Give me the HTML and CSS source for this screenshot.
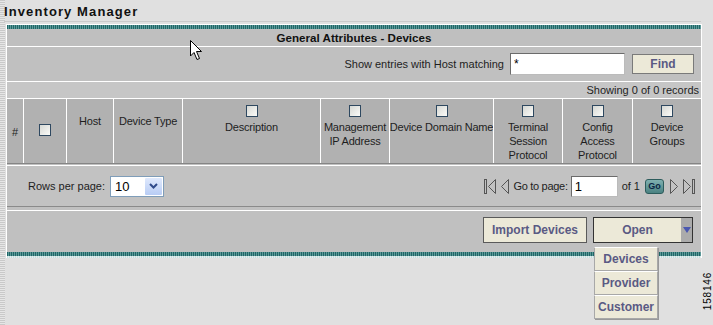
FILE: index.html
```html
<!DOCTYPE html>
<html lang="en">
<head>
  <meta charset="UTF-8">
  <title>Inventory Manager</title>
  <link rel="stylesheet" href="styles.css">
</head>
<body>

  <div class="app-title">Inventory Manager</div>

  <div class="panel">
    <div class="stripe"></div>
    <div class="panel-title">General Attributes - Devices</div>

    <div class="search-row">
      <label for="hostFilter">Show entries with Host matching</label>
      <input type="text" id="hostFilter" class="text-input search-input" value="*">
      <button class="btn find-btn">Find</button>
    </div>

    <div class="count-row">Showing 0 of 0 records</div>

    <div class="grid-head">
      <div class="col col-mid">#</div>
      <div class="col col-mid"><span class="checkbox"></span></div>
      <div class="col col-plain">Host</div>
      <div class="col col-plain">Device Type</div>
      <div class="col"><span class="checkbox"></span>Description</div>
      <div class="col"><span class="checkbox"></span>Management<br>IP Address</div>
      <div class="col"><span class="checkbox"></span>Device Domain Name</div>
      <div class="col"><span class="checkbox"></span>Terminal<br>Session<br>Protocol</div>
      <div class="col"><span class="checkbox"></span>Config<br>Access<br>Protocol</div>
      <div class="col"><span class="checkbox"></span>Device<br>Groups</div>
    </div>

    <div class="pager-row">
      <div class="rows-per-page">
        <span>Rows per page:</span>
        <div class="select-box">
          <span class="select-value">10</span>
          <span class="select-btn">
            <svg width="9" height="6" viewBox="0 0 9 6"><path d="M1 1 L4.5 4.5 L8 1" fill="none" stroke="#2f4a8a" stroke-width="2"/></svg>
          </span>
        </div>
      </div>
      <div class="pager">
        <svg class="nav-icon" width="14" height="17" viewBox="0 0 14 17"><rect x="1.5" y="1.5" width="2" height="14" fill="none" stroke="#555"/><path d="M12.5 1.5 L5.5 8.5 L12.5 15.5 Z" fill="none" stroke="#555"/></svg>
        <svg class="nav-icon" width="10" height="17" viewBox="0 0 10 17"><path d="M8.5 1.5 L1.5 8.5 L8.5 15.5 Z" fill="none" stroke="#555"/></svg>
        <span class="page-label">Go to page:</span>
        <input type="text" class="text-input page-input" value="1">
        <span>of 1</span>
        <button class="go-btn">Go</button>
        <svg class="nav-icon" width="10" height="17" viewBox="0 0 10 17"><path d="M1.5 1.5 L8.5 8.5 L1.5 15.5 Z" fill="none" stroke="#555"/></svg>
        <svg class="nav-icon last" width="14" height="17" viewBox="0 0 14 17"><path d="M1.5 1.5 L8.5 8.5 L1.5 15.5 Z" fill="none" stroke="#555"/><rect x="10.5" y="1.5" width="2" height="14" fill="none" stroke="#555"/></svg>
      </div>
    </div>

    <div class="action-row">
      <button class="btn import-btn">Import Devices</button>
      <div class="open-menu">
        <div class="open-btn">
          <span class="open-label">Open</span>
          <span class="open-arrow">
            <svg width="8" height="6" viewBox="0 0 8 6"><path d="M0 0 L8 0 L4 6 Z" fill="#4a58b0"/></svg>
          </span>
        </div>
        <div class="menu-list">
          <div class="menu-item">Devices</div>
          <div class="menu-item">Provider</div>
          <div class="menu-item">Customer</div>
        </div>
      </div>
    </div>

    <div class="stripe"></div>
    <div class="stripe-shadow"></div>
  </div>

  <svg class="cursor" width="13" height="21" viewBox="0 0 13 21">
    <path d="M0.5 0.5 L0.5 16 L4 12.5 L7 19.5 L9.5 18.5 L6.5 11.5 L11.5 11.5 Z" fill="#fff" stroke="#000" stroke-width="1"/>
  </svg>

  <div class="fig-number">158146</div>

</body>
</html>
```

FILE: styles.css
```css
body {
  margin: 0;
  padding: 0;
  width: 713px;
  height: 325px;
  position: relative;
  overflow: hidden;
  font-family: "Liberation Sans", Arial, sans-serif;
  font-size: 11px;
  color: #1e1e1e;
  background: repeating-linear-gradient(0deg, #c9c9c9 0 1px, #e6e6e6 1px 2px) left top / 5px 100% no-repeat, #e0e0e0;
}

.app-title {
  margin-left: 4px;
  padding: 4px 0 0 0;
  height: 17px;
  width: 697px;
  border-bottom: 1px solid #c9c9c9;
  font-size: 13px;
  font-weight: bold;
  letter-spacing: 1.1px;
  color: #111;
}

.panel {
  margin: 2px 0 0 6px;
  width: 694px;
  border: 1px solid #fff;
  border-bottom: none;
  background-color: #c0c0c0;
}

.stripe {
  height: 4px;
  background: repeating-linear-gradient(90deg, #1f6666 0 1px, #5c9999 1px 2px);
}

.stripe-shadow {
  height: 2px;
  background: repeating-linear-gradient(90deg, #c6dede 0 1px, #e4eeee 1px 2px);
}

.panel-title {
  height: 17px;
  line-height: 17px;
  text-align: center;
  font-size: 11.6px;
  font-weight: bold;
  background-color: #bfbfbf;
  border-bottom: 1px solid #fff;
  color: #111;
}

.search-row {
  height: 34px;
  display: flex;
  justify-content: flex-end;
  align-items: center;
  padding-right: 7px;
  border-bottom: 1px solid #fff;
}

.search-row label {
  margin-right: 6px;
}

.text-input {
  box-sizing: border-box;
  border: 1px solid #6b6b6b;
  border-right-color: #bbb;
  border-bottom-color: #bbb;
  background: #fff;
  font-family: "Liberation Sans", Arial, sans-serif;
  color: #000;
  padding: 0 3px;
  margin: 0;
}

.search-input {
  width: 115px;
  height: 22px;
  font-size: 12px;
}

.btn {
  box-sizing: border-box;
  margin: 0;
  background-color: #ece9d8;
  border: 1px solid #7a7a7a;
  font-family: "Liberation Sans", Arial, sans-serif;
  font-size: 12px;
  font-weight: bold;
  color: #5a5a84;
  padding: 0;
}

.find-btn {
  width: 62px;
  height: 20px;
  margin-left: 7px;
}

.count-row {
  height: 16px;
  line-height: 16px;
  text-align: right;
  padding-right: 2px;
  background-color: #c6c6c6;
  border-bottom: 1px solid #fff;
}

.grid-head {
  display: grid;
  grid-template-columns: 16px 43px 47px 69px 138px 69px 104px 69px 70px 69px;
  height: 64px;
  background-color: #b1b1b1;
  border-bottom: 1px solid #858585;
  letter-spacing: -0.2px;
}

.col {
  box-sizing: border-box;
  border-left: 1px solid #fff;
  display: flex;
  flex-direction: column;
  align-items: center;
  text-align: center;
  padding-top: 6px;
  line-height: 14px;
  white-space: nowrap;
}

.col:first-child {
  border-left: none;
}

.col .checkbox {
  margin-bottom: 3px;
}

.col-mid {
  justify-content: center;
  padding-top: 1px;
}

.col-plain {
  padding-top: 15px;
}

.checkbox {
  display: block;
  width: 12px;
  height: 12px;
  box-sizing: border-box;
  border: 1px solid #2e4860;
  background: linear-gradient(135deg, #d6d8d4, #fbfbf8);
}

.pager-row {
  margin-top: 1px;
  border-top: 1px solid #fff;
  height: 40px;
  display: flex;
  align-items: center;
  justify-content: space-between;
  padding: 0 5px 0 21px;
  background-color: #c2c2c2;
  border-bottom: 1px solid #8a8a8a;
}

.rows-per-page {
  display: flex;
  align-items: center;
  gap: 5px;
}

.select-box {
  box-sizing: border-box;
  width: 54px;
  height: 21px;
  border: 1px solid #7f9db9;
  background: #fff;
  display: flex;
  align-items: stretch;
}

.select-value {
  flex: 1;
  font-size: 13px;
  line-height: 19px;
  padding-left: 4px;
  color: #000;
}

.select-btn {
  width: 17px;
  display: flex;
  align-items: center;
  justify-content: center;
  background: linear-gradient(180deg, #dfe9fd, #b8ccf4);
  border: 1px solid #fff;
  border-radius: 2px;
}

.pager {
  display: flex;
  align-items: center;
}

.nav-icon {
  display: block;
  margin-right: 3px;
}

.nav-icon.last {
  margin-right: 0;
}

.page-label {
  letter-spacing: -0.3px;
}

.page-input {
  width: 47px;
  height: 21px;
  font-size: 13px;
  margin: 0 4px 0 3px;
}

.go-btn {
  width: 19px;
  height: 15px;
  margin: 0 5px 0 5px;
  padding: 0;
  border: 1px solid #2d5c5c;
  border-radius: 3px;
  background: linear-gradient(180deg, #80b0b0, #4a8282);
  font-family: "Liberation Sans", Arial, sans-serif;
  font-size: 9px;
  font-weight: bold;
  line-height: 12px;
  color: #0b2644;
}

.action-row {
  margin-top: 3px;
  border-top: 1px solid #fff;
  height: 42px;
  display: flex;
  justify-content: flex-end;
  align-items: flex-start;
  padding: 6px 8px 0 0;
  box-sizing: border-box;
}

.import-btn {
  width: 104px;
  height: 26px;
  border-color: #5a5a5a;
  margin-right: 6px;
}

.open-menu {
  position: relative;
}

.open-btn {
  box-sizing: border-box;
  width: 100px;
  height: 26px;
  border: 1px solid #333;
  background-color: #ece9d8;
  display: flex;
}

.open-label {
  flex: 1;
  text-align: center;
  line-height: 24px;
  font-size: 12px;
  font-weight: bold;
  color: #5a5a84;
}

.open-arrow {
  width: 11px;
  background-color: #ababab;
  display: flex;
  align-items: center;
  justify-content: center;
}

.menu-list {
  position: absolute;
  top: 30px;
  left: 1px;
  width: 64px;
  box-shadow: 1px 1px 0 #999;
}

.menu-item {
  box-sizing: border-box;
  height: 24px;
  line-height: 22px;
  text-align: center;
  background-color: #ece9d8;
  border: 1px solid #a8a8a8;
  border-top-color: #fff;
  font-size: 12px;
  font-weight: bold;
  color: #5a5a84;
}

.cursor {
  position: absolute;
  left: 190px;
  top: 40px;
}

.fig-number {
  position: absolute;
  right: 0;
  top: 272px;
  writing-mode: vertical-rl;
  transform: rotate(180deg);
  font-size: 10px;
  letter-spacing: 0.8px;
  color: #000;
}
```
